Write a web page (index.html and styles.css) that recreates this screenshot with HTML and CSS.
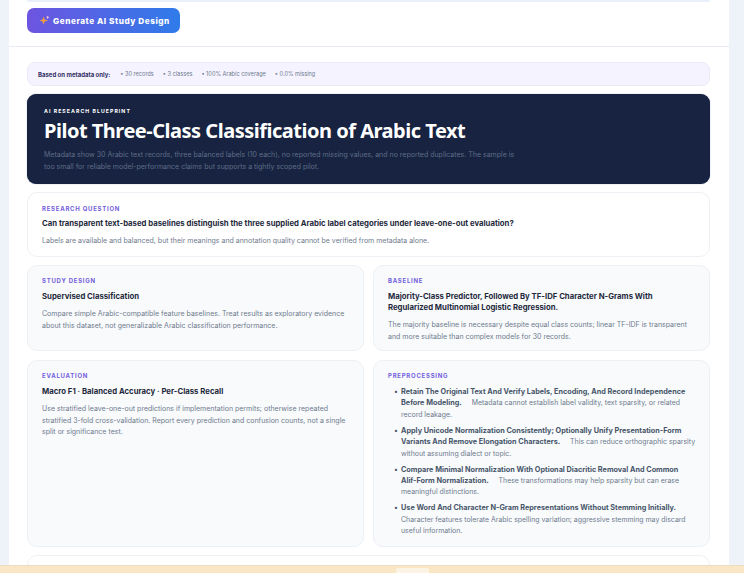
FILE: index.html
```html
<!DOCTYPE html>
<html lang="en">
<head>
<meta charset="utf-8">
<title>AI Research Blueprint</title>
<link rel="stylesheet" href="styles.css">
</head>
<body>
<main class="panel">
  <div class="top-card"></div>
  <div class="action">
    <button class="generate"><svg class="spark" viewBox="0 0 12 12" width="11" height="11"><path d="M5 1.5 6.2 4.8 10 6 6.2 7.2 5 10.5 3.8 7.2 0.5 6 3.8 4.8Z" fill="#f59e42"/><path d="M9.5 0.5 10.1 2 11.5 2.5 10.1 3 9.5 4.5 8.9 3 7.5 2.5 8.9 2Z" fill="#f9c9d4"/></svg>Generate AI Study Design</button>
  </div>
  <div class="content">
    <div class="meta">
      <strong>Based on metadata only:</strong>
      <span>• 30 records</span>
      <span>• 3 classes</span>
      <span>• 100% Arabic coverage</span>
      <span>• 0.0% missing</span>
    </div>
    <section class="hero">
      <div class="eyebrow">AI RESEARCH BLUEPRINT</div>
      <h1>Pilot Three-Class Classification of Arabic Text</h1>
      <p>Metadata show 30 Arabic text records, three balanced labels (10 each), no reported missing values, and no reported duplicates. The sample is too small for reliable model-performance claims but supports a tightly scoped pilot.</p>
    </section>
    <section class="card plain">
      <div class="label">RESEARCH QUESTION</div>
      <h2>Can transparent text-based baselines distinguish the three supplied Arabic label categories under leave-one-out evaluation?</h2>
      <p>Labels are available and balanced, but their meanings and annotation quality cannot be verified from metadata alone.</p>
    </section>
    <div class="grid">
      <section class="card">
        <div class="label">STUDY DESIGN</div>
        <h2>Supervised Classification</h2>
        <p>Compare simple Arabic-compatible feature baselines. Treat results as exploratory evidence about this dataset, not generalizable Arabic classification performance.</p>
      </section>
      <section class="card">
        <div class="label">BASELINE</div>
        <h2>Majority-Class Predictor, Followed By TF-IDF Character N-Grams With Regularized Multinomial Logistic Regression.</h2>
        <p>The majority baseline is necessary despite equal class counts; linear TF-IDF is transparent and more suitable than complex models for 30 records.</p>
      </section>
      <section class="card">
        <div class="label">EVALUATION</div>
        <h2>Macro F1 · Balanced Accuracy · Per-Class Recall</h2>
        <p>Use stratified leave-one-out predictions if implementation permits; otherwise repeated stratified 3-fold cross-validation. Report every prediction and confusion counts, not a single split or significance test.</p>
      </section>
      <section class="card list-card">
        <div class="label">PREPROCESSING</div>
        <ul>
          <li><b>Retain The Original Text And Verify Labels, Encoding, And Record Independence Before Modeling.</b> Metadata cannot establish label validity, text sparsity, or related record leakage.</li>
          <li><b>Apply Unicode Normalization Consistently; Optionally Unify Presentation-Form Variants And Remove Elongation Characters.</b> This can reduce orthographic sparsity without assuming dialect or topic.</li>
          <li><b>Compare Minimal Normalization With Optional Diacritic Removal And Common <span class="nowrap">Alif-Form</span> Normalization.</b> These transformations may help sparsity but can erase meaningful distinctions.</li>
          <li><b>Use Word And Character N-Gram Representations Without Stemming Initially.</b> Character features tolerate Arabic spelling variation; aggressive stemming may discard useful information.</li>
        </ul>
      </section>
    </div>
    <section class="card plain last"></section>
  </div>
</main>
<div class="bottom-bar"><span class="tab"></span></div>
</body>
</html>
```

FILE: styles.css
```css
* { box-sizing: border-box; }
html, body { margin: 0; height: 573px; overflow: hidden; }
body {
  background: #eef2f9;
  font-family: Inter, "Liberation Sans", sans-serif;
  color: #1e293b;
}
.panel {
  width: 720px;
  height: 573px;
  overflow: hidden;
  margin-left: 9px;
  background: #fff;
}
.top-card {
  height: 2px;
  margin: 0 19px 0 18px;
  background: #e9f0fb;
  border-radius: 0 0 6px 6px;
}
.action {
  padding: 6px 18px 13px;
  border-bottom: 1px solid #e8ecf2;
}
.generate {
  display: flex;
  align-items: center;
  gap: 3px;
  width: 153px;
  height: 25px;
  padding: 0 0 0 12px;
  border: 0;
  border-radius: 7px;
  background: linear-gradient(90deg, #6d55e0, #2f7bea);
  color: #fff;
  font: 800 8.2px Inter, sans-serif;
  letter-spacing: 0.55px;
  white-space: nowrap;
}
.spark { flex: none; }
.content {
  padding: 15px 19px 0 18px;
  display: flex;
  flex-direction: column;
  gap: 8px;
}
.meta {
  display: flex;
  align-items: center;
  gap: 9px;
  height: 24px;
  flex: none;
  padding: 0 10px;
  background: #f5f3ff;
  border: 1px solid #ede9fb;
  border-radius: 8px;
  font-size: 5.6px;
  color: #6f7b8e;
}
.meta strong { color: #312e63; font-weight: 700; font-size: 6px; margin-right: 1px; }
.hero {
  flex: none;
  height: 90px;
  padding: 14px 17px 0;
  background: #172340;
  border-radius: 9px;
  box-shadow: 0 0 1px #64748b;
  color: #fff;
}
.eyebrow {
  font-size: 5.2px;
  font-weight: 700;
  letter-spacing: 1.05px;
  line-height: 7px;
}
.hero h1 {
  margin: 3px 0 5px;
  font: 700 20px/26px "Noto Sans", sans-serif;
  letter-spacing: -0.49px;
  white-space: nowrap;
}
.hero p {
  margin: 0;
  max-width: 480px;
  font-size: 7px;
  line-height: 11.6px;
  color: #5f6d87;
}
.card {
  padding: 12px 14px;
  background: #f8fafc;
  border: 1px solid #edf0f5;
  border-radius: 10px;
  min-width: 0;
}
.plain { background: #fff; height: 65px; flex: none; }
.last { height: 40px; }
.label {
  font-size: 6px;
  font-weight: 700;
  letter-spacing: 0.75px;
  line-height: 7px;
  color: #7360dc;
}
.card h2 {
  margin: 6px 0 6px;
  font-size: 7.75px;
  line-height: 11px;
  font-weight: 700;
  color: #1e293b;
}
.card p {
  margin: 0;
  font-size: 7px;
  line-height: 11.7px;
  color: #6f7b8e;
}
.grid {
  display: grid;
  grid-template-columns: 337px 337px;
  grid-template-rows: 86px 187px;
  gap: 9px;
  flex: none;
}
.grid .card { padding-top: 11px; }
.grid .card h2 { margin-top: 7px; }
.grid .list-card { padding-right: 10px; }
ul { margin: 7px 0 0; padding: 0 0 0 6px; list-style: none; }
li {
  margin-bottom: 4.4px;
  padding-left: 7px;
  text-indent: -7px;
  font-size: 6.95px;
  line-height: 11.45px;
  color: #6f7b8e;
}
li::before {
  content: "•";
  display: inline-block;
  width: 7px;
  text-indent: 0;
  color: #475569;
}
li b { color: #475569; margin-right: 8px; font-size: 7.27px; }
.nowrap { white-space: nowrap; }
.bottom-bar {
  position: fixed;
  left: 0;
  right: 0;
  bottom: 0;
  height: 8px;
  background: #f8e6c4;
  border-top: 1px solid #ecdcc0;
}
.tab {
  position: absolute;
  left: 396px;
  top: 2px;
  width: 33px;
  height: 6px;
  background: #fbf3e4;
  border-radius: 2px 2px 0 0;
}
```
